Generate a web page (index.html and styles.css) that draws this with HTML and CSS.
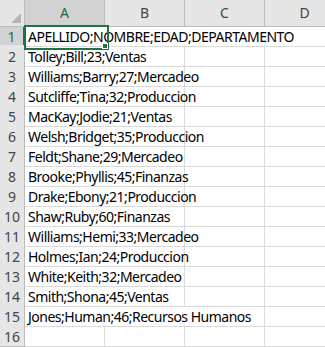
FILE: index.html
```html
<!DOCTYPE html>
<html lang="es">
<head>
    <meta charset="UTF-8">
    <title>Libro1</title>
    <link rel="stylesheet" href="styles.css">
</head>
<body>
    <div class="sheet">
        <div class="row head">
            <div class="corner"><span class="tri"></span></div>
            <div class="col-head active">A</div>
            <div class="col-head">B</div>
            <div class="col-head">C</div>
            <div class="col-head">D</div>
        </div>
        <div class="row">
            <div class="row-head active">1</div>
            <div class="cell span4 selected">APELLIDO;NOMBRE;EDAD;DEPARTAMENTO<span class="handle"></span></div>
        </div>
        <div class="row">
            <div class="row-head">2</div>
            <div class="cell span2">Tolley;Bill;23;Ventas</div>
            <div class="cell"></div><div class="cell"></div>
        </div>
        <div class="row">
            <div class="row-head">3</div>
            <div class="cell span2">Williams;Barry;27;Mercadeo</div>
            <div class="cell"></div><div class="cell"></div>
        </div>
        <div class="row">
            <div class="row-head">4</div>
            <div class="cell span2">Sutcliffe;Tina;32;Produccion</div>
            <div class="cell"></div><div class="cell"></div>
        </div>
        <div class="row">
            <div class="row-head">5</div>
            <div class="cell span2">MacKay;Jodie;21;Ventas</div>
            <div class="cell"></div><div class="cell"></div>
        </div>
        <div class="row">
            <div class="row-head">6</div>
            <div class="cell span2">Welsh;Bridget;35;Produccion</div>
            <div class="cell"></div><div class="cell"></div>
        </div>
        <div class="row">
            <div class="row-head">7</div>
            <div class="cell span2">Feldt;Shane;29;Mercadeo</div>
            <div class="cell"></div><div class="cell"></div>
        </div>
        <div class="row">
            <div class="row-head">8</div>
            <div class="cell span2">Brooke;Phyllis;45;Finanzas</div>
            <div class="cell"></div><div class="cell"></div>
        </div>
        <div class="row">
            <div class="row-head">9</div>
            <div class="cell span2">Drake;Ebony;21;Produccion</div>
            <div class="cell"></div><div class="cell"></div>
        </div>
        <div class="row">
            <div class="row-head">10</div>
            <div class="cell span2">Shaw;Ruby;60;Finanzas</div>
            <div class="cell"></div><div class="cell"></div>
        </div>
        <div class="row">
            <div class="row-head">11</div>
            <div class="cell span2">Williams;Hemi;33;Mercadeo</div>
            <div class="cell"></div><div class="cell"></div>
        </div>
        <div class="row">
            <div class="row-head">12</div>
            <div class="cell span2">Holmes;Ian;24;Produccion</div>
            <div class="cell"></div><div class="cell"></div>
        </div>
        <div class="row">
            <div class="row-head">13</div>
            <div class="cell span2">White;Keith;32;Mercadeo</div>
            <div class="cell"></div><div class="cell"></div>
        </div>
        <div class="row">
            <div class="row-head">14</div>
            <div class="cell span2">Smith;Shona;45;Ventas</div>
            <div class="cell"></div><div class="cell"></div>
        </div>
        <div class="row">
            <div class="row-head">15</div>
            <div class="cell span3">Jones;Human;46;Recursos Humanos</div>
            <div class="cell"></div>
        </div>
        <div class="row">
            <div class="row-head">16</div>
            <div class="cell"></div><div class="cell"></div><div class="cell"></div><div class="cell"></div>
        </div>
    </div>
</body>
</html>
```
FILE: styles.css
```css
* {
    margin: 0;
    padding: 0;
    box-sizing: border-box;
}

body {
    background: #fff;
    font-family: 'Noto Sans', sans-serif;
    overflow: hidden;
}

.sheet {
    width: 325px;
    height: 347px;
    overflow: hidden;
}

.row {
    display: grid;
    grid-template-columns: 25px repeat(4, 80px);
    height: 20px;
}

.row.head {
    height: 25px;
}

.corner {
    position: relative;
    background: #e6e6e6;
    border-right: 1px solid #bcbcbc;
    border-bottom: 1px solid #bcbcbc;
}

.tri {
    position: absolute;
    right: 3px;
    bottom: 3px;
    width: 0;
    height: 0;
    border-left: 10px solid transparent;
    border-bottom: 10px solid #b5b5b5;
}

.col-head {
    background: #e6e6e6;
    border-right: 1px solid #bcbcbc;
    border-bottom: 1px solid #bcbcbc;
    color: #444;
    font-size: 14px;
    text-align: center;
    line-height: 25px;
}

.col-head.active {
    background: #d2d2d2;
    color: #1e6b41;
    border-bottom: 2px solid #217346;
}

.row-head {
    background: #e6e6e6;
    border-right: 1px solid #bcbcbc;
    border-bottom: 1px solid #bcbcbc;
    color: #444;
    font-size: 14px;
    text-align: center;
    line-height: 19px;
    padding-top: 2px;
}

.row-head.active {
    background: #d2d2d2;
    color: #1e6b41;
    border-right: 2px solid #217346;
}

.cell {
    position: relative;
    border-right: 1px solid #dadada;
    border-bottom: 1px solid #dadada;
    font-size: 14px;
    letter-spacing: -0.5px;
    line-height: 19px;
    padding: 2px 0 0 3px;
    white-space: nowrap;
    color: #000;
}

.span2 { grid-column: span 2; }
.span3 { grid-column: span 3; }
.span4 { grid-column: span 4; }

.cell.selected {
    border: none;
    border-bottom: 1px solid #dadada;
}

.cell.selected::before {
    content: "";
    position: absolute;
    left: -1px;
    top: 0;
    width: 81px;
    height: 21px;
    border: 2px solid #217346;
}

.handle {
    position: absolute;
    left: 77px;
    top: 18px;
    width: 6px;
    height: 6px;
    background: #217346;
    border: 1px solid #fff;
    z-index: 2;
}
```
